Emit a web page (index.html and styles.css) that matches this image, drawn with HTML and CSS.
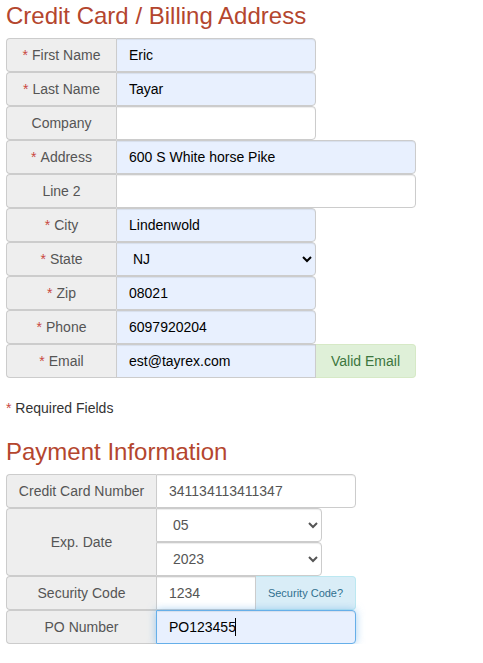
FILE: index.html
```html
<!DOCTYPE html>
<html lang="en">
<head>
<meta charset="utf-8">
<title>Billing</title>
<link rel="stylesheet" href="styles.css">
</head>
<body>
<form class="page">
  <h3 class="title">Credit Card / Billing Address</h3>
  <div class="fields billing">
    <div class="group short">
      <span class="addon"><span class="req">*</span> First Name</span>
      <input class="control auto" type="text" value="Eric">
    </div>
    <div class="group short">
      <span class="addon"><span class="req">*</span> Last Name</span>
      <input class="control auto" type="text" value="Tayar">
    </div>
    <div class="group short">
      <span class="addon">Company</span>
      <input class="control" type="text" value="">
    </div>
    <div class="group long">
      <span class="addon"><span class="req">*</span> Address</span>
      <input class="control auto" type="text" value="600 S White horse Pike">
    </div>
    <div class="group long">
      <span class="addon">Line 2</span>
      <input class="control" type="text" value="">
    </div>
    <div class="group short">
      <span class="addon"><span class="req">*</span> City</span>
      <input class="control auto" type="text" value="Lindenwold">
    </div>
    <div class="group short">
      <span class="addon"><span class="req">*</span> State</span>
      <select class="control auto">
        <option>NY</option>
        <option selected>NJ</option>
        <option>PA</option>
      </select>
    </div>
    <div class="group short">
      <span class="addon"><span class="req">*</span> Zip</span>
      <input class="control auto" type="text" value="08021">
    </div>
    <div class="group short">
      <span class="addon"><span class="req">*</span> Phone</span>
      <input class="control auto" type="text" value="6097920204">
    </div>
    <div class="group long">
      <span class="addon"><span class="req">*</span> Email</span>
      <input class="control auto mid" type="text" value="est@tayrex.com">
      <span class="addon-end success">Valid Email</span>
    </div>
  </div>
  <p class="note"><span class="req">*</span> Required Fields</p>

  <h3 class="title second">Payment Information</h3>
  <div class="fields payment">
    <div class="group pay-full">
      <span class="addon">Credit Card Number</span>
      <input class="control" type="text" value="341134113411347">
    </div>
    <div class="group pay-exp">
      <span class="addon">Exp. Date</span>
      <div class="stack">
        <select class="control">
          <option>04</option>
          <option selected>05</option>
          <option>06</option>
        </select>
        <select class="control">
          <option>2022</option>
          <option selected>2023</option>
          <option>2024</option>
        </select>
      </div>
    </div>
    <div class="group pay-full">
      <span class="addon">Security Code</span>
      <input class="control mid code" type="text" value="1234">
      <span class="addon-end info">Security Code?</span>
    </div>
    <div class="group pay-full">
      <span class="addon">PO Number</span>
      <span class="caret-wrap">
        <input class="control focus" type="text" value="PO123455">
        <span class="caret"></span>
      </span>
    </div>
  </div>
</form>
</body>
</html>
```
FILE: styles.css
```css
* {
  box-sizing: border-box;
}

body {
  margin: 0;
  background: #fff;
  font-family: "Liberation Sans", Arial, sans-serif;
  font-size: 14px;
  line-height: 20px;
  color: #333;
}

.page {
  padding: 0 6px;
}

.title {
  margin: 3px 0 9px;
  font-size: 24px;
  line-height: 26px;
  font-weight: 400;
  color: #b4462e;
}

.title.second {
  margin-top: 21px;
}

.fields {
  display: flex;
  flex-direction: column;
}

.group {
  display: flex;
  height: 34px;
}

.group.short { width: 310px; }
.group.long { width: 410px; }
.group.pay-full { width: 350px; }
.group.pay-exp { width: 316px; height: 68px; }

.addon {
  flex: none;
  display: flex;
  align-items: center;
  justify-content: center;
  gap: 4px;
  width: 110px;
  background: #eee;
  color: #555;
  border: 1px solid #ccc;
  border-right: 0;
  border-radius: 4px 0 0 4px;
}

.payment .addon {
  width: 150px;
}

.req {
  color: #c9483f;
}

.control {
  flex: 1;
  min-width: 0;
  height: 34px;
  margin: 0;
  padding: 6px 12px;
  font-family: "Liberation Sans", Arial, sans-serif;
  font-size: 14px;
  color: #555;
  background: #fff;
  border: 1px solid #ccc;
  border-radius: 0 4px 4px 0;
  box-shadow: inset 0 1px 1px rgba(0, 0, 0, 0.075);
  outline: none;
}

select.control {
  padding: 6px 8px 6px 12px;
}

.control.auto {
  background: #e8f0fe;
  color: #000;
}

.control.mid {
  border-radius: 0;
}

.control.code {
  flex: none;
  width: 100px;
}

.addon-end {
  flex: none;
  display: flex;
  align-items: center;
  justify-content: center;
  width: 100px;
  border: 1px solid #ccc;
  border-left: 0;
  border-radius: 0 4px 4px 0;
}

.addon-end.success {
  background: #dff0d8;
  color: #3c763d;
  border-color: #d6e9c6;
}

.addon-end.info {
  background: #d9edf7;
  color: #31708f;
  border-color: #bce8f1;
  font-size: 11px;
}

.stack {
  display: flex;
  flex-direction: column;
  width: 166px;
}

.stack .control {
  flex: none;
  width: 166px;
}

.caret-wrap {
  position: relative;
  flex: 1;
  min-width: 0;
  display: flex;
}

.caret-wrap .control {
  width: 100%;
}

.control.focus {
  background: #e8f0fe;
  color: #000;
  border-color: #66afe9;
  box-shadow: inset 0 1px 1px rgba(0, 0, 0, 0.075), 0 0 8px rgba(102, 175, 233, 0.6);
}

.caret {
  position: absolute;
  left: 79px;
  top: 8px;
  width: 1px;
  height: 18px;
  background: #000;
}

.note {
  margin: 20px 0 0;
}
```
